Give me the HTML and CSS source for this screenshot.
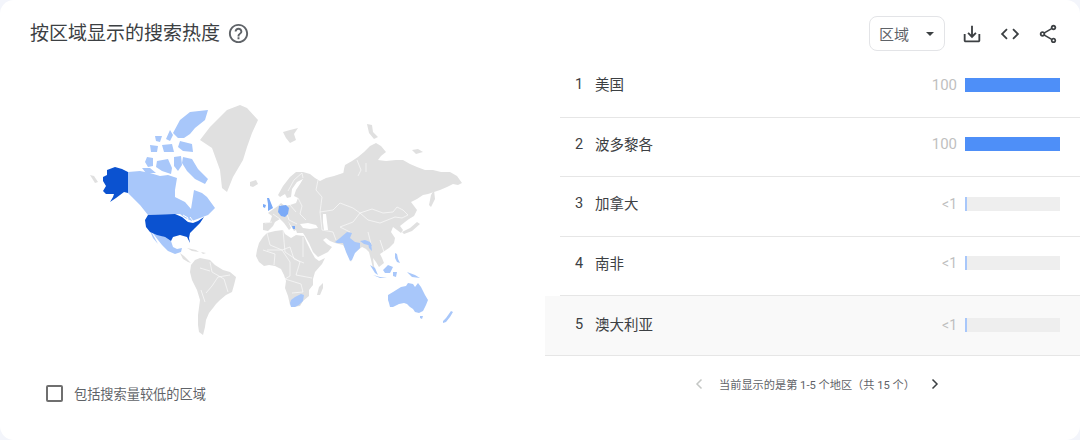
FILE: index.html
```html
<!DOCTYPE html>
<html lang="zh-CN">
<head>
<meta charset="utf-8">
<title>按区域显示的搜索热度</title>
<link rel="stylesheet" href="styles.css">
</head>
<body>
<main class="card">
  <header class="header">
    <div class="title-wrap">
      <h2 class="title">按区域显示的搜索热度</h2>
      <svg class="help" viewBox="0 0 24 24"><path d="M11 18h2v-2h-2v2zm1-16C6.480 2 2 6.480 2 12s4.480 10 10 10 10-4.480 10-10S17.520 2 12 2zm0 18c-4.410 0-8-3.590-8-8s3.590-8 8-8 8 3.590 8 8-3.590 8-8 8zm0-14c-2.210 0-4 1.790-4 4h2c0-1.100.9-2 2-2s2 .9 2 2c0 2-3 1.750-3 5h2c0-2.250 3-2.500 3-5 0-2.210-1.790-4-4-4z"/></svg>
    </div>
    <div class="actions">
      <div class="select"><span>区域</span><span class="caret"></span></div>
      <svg class="icon" viewBox="0 0 24 24"><path d="M19 12v7H5v-7H3v7c0 1.100.9 2 2 2h14c1.100 0 2-.9 2-2v-7h-2zm-6 .67l2.590-2.580L17 11.500l-5 5-5-5 1.410-1.410L11 12.670V3h2v9.670z"/></svg>
      <svg class="icon" viewBox="0 0 24 24"><path d="M9.400 16.600L4.800 12l4.600-4.600L8 6l-6 6 6 6 1.400-1.400zm5.200 0l4.600-4.600-4.600-4.600L16 6l6 6-6 6-1.400-1.400z"/></svg>
      <svg class="icon" viewBox="0 0 24 24"><path d="M18 16.080c-.76 0-1.440.3-1.960.77L8.910 12.700c.05-.23.09-.46.09-.7s-.04-.47-.09-.7l7.050-4.110c.54.5 1.250.81 2.040.81 1.660 0 3-1.340 3-3s-1.340-3-3-3-3 1.340-3 3c0 .24.04.47.09.7L8.040 9.810C7.500 9.310 6.790 9 6 9c-1.660 0-3 1.340-3 3s1.340 3 3 3c.79 0 1.500-.31 2.040-.81l7.120 4.160c-.05.21-.08.43-.08.65 0 1.610 1.310 2.920 2.920 2.920s2.920-1.310 2.920-2.920-1.310-2.920-2.920-2.920zM18 4c.55 0 1 .45 1 1s-.45 1-1 1-1-.45-1-1 .45-1 1-1zM6 13c-.55 0-1-.45-1-1s.45-1 1-1 1 .45 1 1-.45 1-1 1zm12 7.020c-.55 0-1-.45-1-1s.45-1 1-1 1 .45 1 1-.45 1-1 1z"/></svg>
    </div>
  </header>
  <div class="body">
    <section class="map-col">
      <svg class="map" viewBox="70 95 410 250">
        <g class="land">
          <path d="M240 105 247 108 258 120 252 133 247 147 243 160 233 177 227 192 222 188 220 170 212 148 200 140 210 127 227 110z"/>
          <path d="M90 175 94 176 98 182 95 183z"/>
          <path d="M250 182 256 180 258 184 253 187 250 186z"/>
          <path d="M283 132 290 130 298 128 294 134 296 140 290 143 286 138z"/>
          <path d="M367 124 372 125 373 132 378 137 374 139 369 133z"/>
          <path d="M412 150 418 149 423 152 416 154z"/>
          <path d="M315 178 320 181 326 178 334 176 343 173 345 165 352 161 358 157 364 152 370 146 376 143 381 146 386 152 381 156 378 160 386 161 396 160 403 160 410 164 417 167 425 170 433 170 441 172 450 172 457 176 462 183 458 185 453 184 447 187 440 190 434 192 428 194 423 195 417 199 411 202 414 206 417 210 414 216 409 219 405 222 400 226 403 230 401 233 397 230 393 227 391 232 395 238 394 243 389 248 383 252 380 254 382 258 384 263 379 267 376 262 373 258 374 266 376 272 373 268 371 260 369 252 366 249 362 247 358 250 353 254 351 262 347 252 343 245 335 243 330 241 326 238 323 240 327 244 332 247 328 252 318 257 313 252 309 243 305 236 303 233 297 233 296 230 294 231 291 226 288 221 291 228 289 230 284 223 280 219 275 222 273 226 268 231 263 230 263 223 270 222 272 216 268 213 272 210 278 206 281 203 285 206 290 205 296 203 298 198 294 196 296 190 300 184 303 179 297 182 292 189 291 197 287 198 285 194 280 197 278 195 283 186 290 177 296 172 303 172 310 174z"/>
          <path d="M257 250 259 243 263 237 267 233 275 231 283 230 285 234 291 238 296 235 304 236 307 243 311 251 315 258 319 261 325 258 322 264 315 272 313 279 313 285 309 290 309 296 303 301 300 306 293 307 290 305 288 296 285 288 286 281 284 275 281 269 275 266 269 265 264 266 259 262 256 256z"/>
          <path d="M317 295 319 287 323 283 323 288 320 295z"/>
          <path d="M195 260 200 258 210 260 215 265 223 270 230 272 236 277 234 285 232 292 226 295 220 300 216 304 213 308 209 313 206 320 205 327 203 335 199 332 198 325 198 315 200 300 197 290 192 280 190 272 191 265z"/>
          <path d="M180 253 184 256 188 260 191 263 188 262 183 259zM187 248 196 250 199 252 192 251zM201 252 206 253 203 254z"/>
          <path d="M431 195 434 190 435 199 431 207 429 205zM417 222 420 224 412 231 404 234 402 232 410 228z"/>
        </g>
        <g class="sea">
          <path d="M300 224 308 223 316 225 318 228 310 229 303 228z"/>
          <path d="M323 214 326 214 327 222 328 230 324 230 323 222z"/>
        </g>
        <g class="borders">
          <path d="M267 233 270 245 282 250 290 247 294 259 304 263M283 230 285 252 300 262 296 275 312 278M267 250 282 250 290 262M290 262 290 276 285 279 301 284 303 292 292 293M303 237 303 257M263 250 275 254 274 265"/>
          <path d="M230 275 218 277 212 286 206 293M201 290 205 302M210 262 212 272 224 279 228 292M200 268 210 271"/>
          <path d="M320 212 333 210 340 203 353 208 360 213 372 209 383 213 393 212 397 207 403 210 408 215 402 218 395 217 380 223 368 220 360 213M360 213 353 222 340 227 350 232M320 212 322 230 333 232 336 240M368 232 371 244M380 240 384 252"/>
          <path d="M298 198 302 206 300 214 306 220M280 205 286 211 289 220 297 224M290 205 296 212M273 214 280 219M265 223 272 222M318 180 316 190 322 197 320 212"/>
          <path d="M357 160 361 170 358 176M343 173 344 163M366 163 366 172"/>
          <path d="M303 178 302 173 294 180 288 191"/>
        </g>
        <g class="light">
          <path d="M128 172 140 171 150 173 160 176 168 175 177 178 175 190 175 197 185 202 191 209 194 190 202 193 207 197 215 208 208 215 200 218 192 221 185 218 180 214 148 215 140 205 128 193z"/>
          <path d="M173 133 180 120 190 112 208 110 205 120 195 128 190 134 184 138 178 138z"/>
          <path d="M170 130 173 135 170 141 166 139zM155 136 162 136 160 142 156 141zM180 141 192 144 193 152 183 151 178 147zM150 145 158 146 157 152 151 152zM162 145 172 144 174 152 164 152z"/>
          <path d="M147 157 153 158 153 166 148 167 145 162z"/>
          <path d="M157 161 168 159 172 168 171 174 162 171 156 167z"/>
          <path d="M174 157 181 156 182 165 178 171 174 166z"/>
          <path d="M183 157 192 159 198 169 208 179 205 184 195 179 187 171 182 163z"/>
          <path d="M142 168 150 168 156 173 146 173z"/>
          <path d="M152 232 165 237 171 241 173 247 177 249 182 248 181 252 175 254 168 251 162 245 158 240z"/>
          <path d="M150 231 152 233 158 244 153 238z"/>
          <path d="M291 300 295 297 301 294 304 295 303 301 299 305 295 307 291 307 290 303z"/>
          <path d="M335 242 340 238 347 232 352 233 350 238 355 242 360 243 360 248 355 253 352 260 350 261 346 252 343 243 337 243z"/>
          <path d="M360 241 365 240 370 242 372 246 368 245 364 244zM368 243 371 243 372 251 369 248z"/>
          <path d="M370 265 375 268 378 275 375 273zM383 270 388 265 393 267 390 273 385 273zM373 275 380 277 387 278 380 278zM395 253 397 254 398 259 400 263 397 262 395 258zM393 272 397 272 396 277 393 276zM407 272 415 275 420 278 412 277z"/>
          <path d="M388 295 393 292 401 287 406 286 408 283 413 284 415 287 418 283 421 287 425 295 428 300 426 305 423 311 419 313 415 312 413 309 410 307 407 304 404 303 399 304 393 307 390 307 389 303 388 300z"/>
          <path d="M420 316 423 316 422 319 420 318zM443 321 446 318 451 311 453 312 450 317 446 322 443 323z"/>
        </g>
        <g class="mid">
          <path d="M267 198 269 198 273 208 268 211 268 204z"/>
          <path d="M263 204 266 205 265 208 263 207z"/>
          <path d="M279 206 286 205 289 208 288 214 285 217 281 216 278 212z"/>
          <path d="M292 226 295 226 295 229 293 229z"/>
        </g>
        <g class="dark">
          <path d="M107 170 115 167 122 169 128 172 128 193 124 192 120 195 116 198 110 202 113 197 114 194 106 194 103 191 106 186 103 181 103 177 107 175z"/>
          <path d="M148 215 175 214 182 217 188 222 193 223 198 221 204 217 200 223 195 228 190 233 189 238 190 243 187 237 180 235 173 237 171 241 165 237 157 235 150 232 146 227 145 220z"/>
        </g>
        <g class="lakes">
          <path d="M183 215 188 218 187 221M190 217 193 221"/>
        </g>
      </svg>
      <label class="low-volume"><span class="checkbox"></span><span>包括搜索量较低的区域</span></label>
    </section>
    <section class="list-col">
      <ol class="rows">
        <li class="row"><span class="rank">1</span><span class="name">美国</span><span class="value">100</span><span class="bar"><span class="fill" style="width:100%"></span></span></li>
        <li class="row"><span class="rank">2</span><span class="name">波多黎各</span><span class="value">100</span><span class="bar"><span class="fill" style="width:100%"></span></span></li>
        <li class="row"><span class="rank">3</span><span class="name">加拿大</span><span class="value small">&lt;1</span><span class="bar"><span class="fill low" style="width:2px"></span></span></li>
        <li class="row"><span class="rank">4</span><span class="name">南非</span><span class="value small">&lt;1</span><span class="bar"><span class="fill low" style="width:2px"></span></span></li>
        <li class="row active"><span class="rank">5</span><span class="name">澳大利亚</span><span class="value small">&lt;1</span><span class="bar"><span class="fill low" style="width:2px"></span></span></li>
      </ol>
      <nav class="pager">
        <svg class="chev off" viewBox="0 0 12 12"><path d="M8.500 1.500L4 6l4.500 4.500"/></svg>
        <span class="pager-text">当前显示的是第 1-5 个地区（共 15 个）</span>
        <svg class="chev" viewBox="0 0 12 12"><path d="M3.500 1.500L8 6l-4.500 4.500"/></svg>
      </nav>
    </section>
  </div>
</main>
</body>
</html>
```

FILE: styles.css
```css
* { box-sizing: border-box; }
html, body { margin: 0; height: 100%; }
body {
  background: #f3f5fb;
  font-family: Roboto, "Noto Sans CJK SC", sans-serif;
  color: #3c4043;
  overflow: hidden;
}
.card {
  width: 1080px;
  height: 440px;
  background: #fff;
  border-radius: 14px;
  display: flex;
  flex-direction: column;
}
.header {
  height: 58px;
  padding: 16px 21px 0 30px;
  display: flex;
  justify-content: space-between;
  align-items: flex-start;
}
.title-wrap { display: flex; align-items: center; gap: 7px; height: 35px; }
.title { margin: 0; font-size: 19px; font-weight: 400; line-height: 35px; color: #3c4043; }
.help { width: 23px; height: 23px; fill: #5f6368; }
.actions { display: flex; align-items: center; gap: 16px; height: 35px; }
.select {
  width: 76px;
  height: 35px;
  border: 1px solid #e3e4e7;
  border-radius: 8px;
  padding: 0 9px;
  display: flex;
  align-items: center;
  justify-content: space-between;
  font-size: 15px;
  color: #5f6368;
}
.caret {
  width: 0;
  height: 0;
  border-left: 4px solid transparent;
  border-right: 4px solid transparent;
  border-top: 4px solid #3c4043;
  margin-right: 1px;
}
.icon { width: 22px; height: 22px; fill: #3c4043; }
.body { flex: 1; display: flex; min-height: 0; }
.map-col { width: 545px; display: flex; flex-direction: column; padding-top: 37px; }
.map { width: 410px; height: 250px; margin-left: 70px; display: block; filter: blur(.4px); }
.land path { fill: #e0e0e0; }
.sea path { fill: #fff; }
.borders path { fill: none; stroke: #fff; stroke-width: .6; }
.light path { fill: #a8c7fa; }
.mid path { fill: #7baaf7; }
.dark path { fill: #0b52d0; }
.lakes path { fill: none; stroke: #fff; stroke-width: 1; }
.low-volume {
  margin: 39px 0 0 46px;
  display: flex;
  align-items: center;
  gap: 11px;
  font-size: 13.200px;
  color: #5f6368;
}
.checkbox { width: 17px; height: 17px; border: 2px solid #6f6f6f; border-radius: 2px; }
.list-col { flex: 1; display: flex; flex-direction: column; }
.rows { list-style: none; margin: 0; padding: 0; }
.row {
  height: 59.500px;
  margin-left: 15px;
  padding: 0 20px 5px 15px;
  border-bottom: 1px solid #e6e6e6;
  display: flex;
  align-items: center;
  font-size: 15px;
}
.row.active {
  margin-left: 0;
  padding-left: 30px;
  padding-bottom: 0;
  background: #f9f9f9;
}
.rank { width: 20px; color: #3c4043; font-size: 14.500px; }
.name { flex: 1; color: #3c4043; font-size: 14.500px; margin-bottom: 2px; }
.active .rank { margin-bottom: 2px; }
.active .name { margin-bottom: 4px; }
.value { color: #bfbfbf; font-size: 15px; margin-right: 8px; }
.value.small { font-size: 14px; }
.bar { width: 95px; height: 14px; background: #eeeeee; display: block; }
.fill { display: block; height: 100%; background: #4e8ff8; }
.fill.low { background: #a8c7fa; }
.pager {
  margin-top: 20px;
  padding-left: 9px;
  display: flex;
  align-items: center;
  justify-content: center;
  gap: 14px;
}
.pager-text { font-size: 11.200px; color: #5f6368; }
.chev { width: 12px; height: 12px; fill: none; stroke: #3c4043; stroke-width: 1.500; }
.chev.off { stroke: #c4c7c5; }
```
